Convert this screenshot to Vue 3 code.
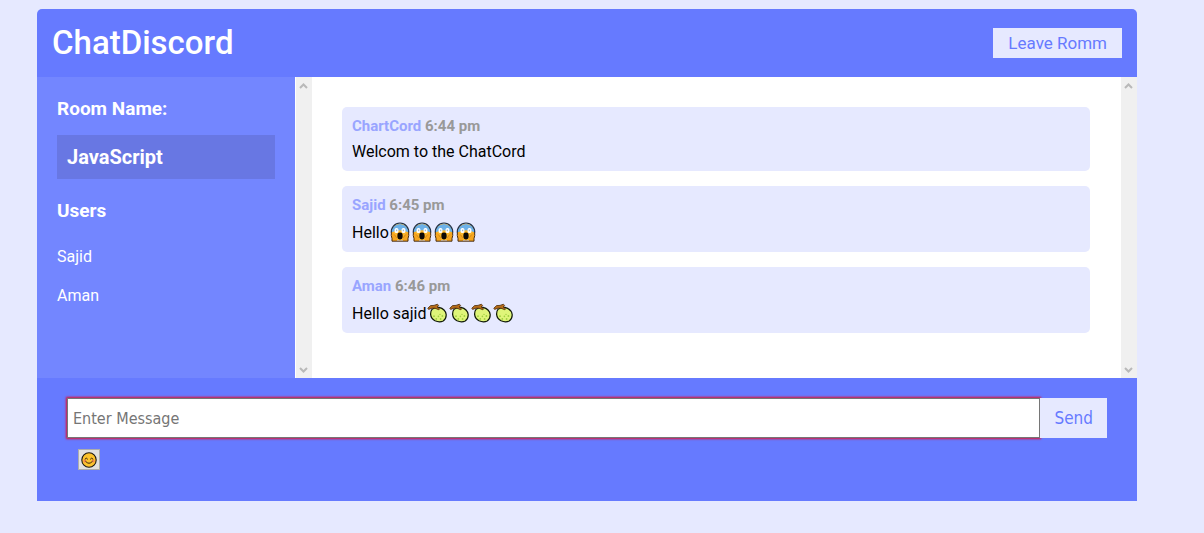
<script setup>
import { ref } from 'vue'

const draft = ref('')
const users = ['Sajid', 'Aman']
const messages = [
  { author: 'ChartCord', time: '6:44 pm', text: 'Welcom to the ChatCord', icon: '' },
  { author: 'Sajid', time: '6:45 pm', text: 'Hello', icon: 'scream' },
  { author: 'Aman', time: '6:46 pm', text: 'Hello sajid', icon: 'fruit' }
]
</script>

<template>
  <div class="page">
    <div class="chat">
      <header class="chat-header">
        <h1>ChatDiscord</h1>
        <a class="leave" href="#">Leave Romm</a>
      </header>

      <main class="chat-main">
        <aside class="sidebar">
          <h3>Room Name:</h3>
          <h2>JavaScript</h2>
          <h3>Users</h3>
          <ul>
            <li v-for="user in users" :key="user">{{ user }}</li>
          </ul>
        </aside>
        <div class="track track-left" aria-hidden="true">
          <svg viewBox="0 0 9 6"><path d="M1 5 L4.5 1.5 L8 5" /></svg>
          <svg viewBox="0 0 9 6"><path d="M1 1 L4.5 4.5 L8 1" /></svg>
        </div>
        <section class="messages">
          <article v-for="m in messages" :key="m.time" class="message">
            <p class="meta">{{ m.author }} <span>{{ m.time }}</span></p>
            <p class="body">
              <span>{{ m.text }}</span>
              <template v-if="m.icon === 'scream'">
                <svg v-for="n in 4" :key="n" class="emoji" viewBox="0 0 22 21">
                  <circle cx="11" cy="11" r="8.6" fill="#fbb62b" />
                  <path d="M2.4 11.5 A8.6 8.6 0 0 1 19.6 11.5 Q11 7 2.4 11.5Z" fill="#6db1e8" />
                  <path d="M2.4 12 A8.7 8.7 0 1 1 19.6 12" fill="none" stroke="#203149" stroke-width="1.2" />
                  <rect x="5.6" y="7" width="3.8" height="5" rx="1.6" fill="#fff" />
                  <rect x="12.6" y="7" width="3.8" height="5" rx="1.6" fill="#fff" />
                  <rect x="7.3" y="8.6" width="0.9" height="1.6" fill="#7f9fb8" />
                  <rect x="13.8" y="8.6" width="0.9" height="1.6" fill="#7f9fb8" />
                  <path d="M2.5 11.5 Q4.4 10.8 5.3 13.5 L7.6 16.5 Q8.6 19 8 20 H3 V17.5 Q2 14 2.5 11.5Z" fill="#f5a51f" />
                  <path d="M19.5 11.5 Q17.6 10.8 16.7 13.5 L14.4 16.5 Q13.4 19 14 20 H19 V17.5 Q20 14 19.5 11.5Z" fill="#f5a51f" />
                  <path d="M2.4 11.5 Q1.8 14.5 3 17.5 V20.2 H19 V17.5 Q20.2 14.5 19.6 11.5" fill="none" stroke="#4a2c0c" stroke-width="1" />
                  <path d="M5.4 13.5 L7.8 16.8 M16.6 13.5 L14.2 16.8" stroke="#c9780f" stroke-width="0.7" />
                  <rect x="8.4" y="11.4" width="5.2" height="7" rx="2.4" fill="#0d0906" />
                </svg>
              </template>
              <template v-if="m.icon === 'fruit'">
                <svg v-for="n in 4" :key="n" class="emoji" viewBox="0 0 22 21">
                  <path d="M6 7.4 Q9 4.8 13 5.4 Q19.4 7 20.2 12.6 Q20.4 17 17.2 19 Q13.5 20.8 9 18.8 Q5 16.5 4.6 12.4 Q4.5 9.3 6 7.4Z" fill="#dff579" stroke="#111a0a" stroke-width="1.2" />
                  <path d="M1.8 6.2 L4.6 3.6 L8 3.4 L11.4 2.2 L12.6 3.4 L11.2 5 L13.6 6.8 L12.8 7.8 L9 6.2 L6 6.2 L2.6 7.4Z" fill="#b86d19" stroke="#4a2908" stroke-width="0.8" />
                  <g fill="#9fcf3f">
                    <circle cx="8" cy="14.2" r="0.9" /><circle cx="10.3" cy="16.9" r="0.9" />
                    <circle cx="12.4" cy="14.4" r="0.8" /><circle cx="14.6" cy="17" r="0.9" />
                    <circle cx="16.4" cy="14" r="0.9" /><circle cx="14" cy="12.4" r="0.7" />
                  </g>
                </svg>
              </template>
            </p>
          </article>
        </section>
        <div class="track" aria-hidden="true">
          <svg viewBox="0 0 9 6"><path d="M1 5 L4.5 1.5 L8 5" /></svg>
          <svg viewBox="0 0 9 6"><path d="M1 1 L4.5 4.5 L8 1" /></svg>
        </div>
      </main>

      <footer class="composer">
        <form @submit.prevent>
          <input v-model="draft" type="text" placeholder="Enter Message" aria-label="Enter Message" />
          <button class="send" type="submit">Send</button>
        </form>
        <button class="picker" type="button" aria-label="Choose an emoji">
          <svg viewBox="0 0 16 16">
            <circle cx="8" cy="8" r="7.2" fill="#fcc32c" stroke="#1c1710" stroke-width="1.1" />
            <circle cx="3.8" cy="9" r="1.5" fill="#f58a4b" />
            <circle cx="12.2" cy="9" r="1.5" fill="#f58a4b" />
            <path d="M4 7 Q5.3 5 6.6 7 M9.4 7 Q10.7 5 12 7 M4.7 9.5 Q8 13.3 11.3 9.5" fill="none" stroke="#3a260c" stroke-width="1" stroke-linecap="round" />
          </svg>
        </button>
      </footer>
    </div>
  </div>
</template>

<style>
body {
  margin: 0;
  background: #e6e9ff;
}
</style>

<style scoped>
* {
  box-sizing: border-box;
  margin: 0;
  padding: 0;
}
.page {
  padding: 9px 67px 32px 37px;
  font-family: Roboto, "Liberation Sans", sans-serif;
  font-size: 16px;
  line-height: 20px;
}
.chat-header {
  display: flex;
  align-items: center;
  justify-content: space-between;
  padding: 14px 15px;
  background: #667aff;
  border-radius: 5px 5px 0 0;
}
h1 {
  color: #fff;
  font-size: 33px;
  font-weight: 500;
  line-height: 40px;
}
.leave {
  padding: 5px 15px;
  background: #e6e9ff;
  color: #667aff;
  font-size: 17px;
  text-decoration: none;
}
.chat-main {
  display: flex;
  background: #fff;
}
.sidebar {
  flex: 0 0 258px;
  padding: 20px;
  background: #7386ff;
  color: #fff;
}
h3 {
  font-size: 19px;
  font-weight: 700;
  line-height: 23px;
}
h2 {
  margin: 15px 0 20px;
  padding: 10px;
  background: #6877e3;
  font-size: 20px;
  font-weight: 700;
  line-height: 24px;
}
ul {
  margin-top: 15px;
  list-style: none;
}
li {
  padding: 10px 0;
  line-height: 19px;
}
.track {
  display: flex;
  flex: 0 0 16px;
  flex-direction: column;
  align-items: center;
  justify-content: space-between;
  padding: 6px 1px 5px 0;
  background: #f0f0f0;
}
.track-left {
  margin-left: 1px;
}
.track svg {
  width: 9px;
  height: 6px;
  fill: none;
  stroke: #b9b9b9;
  stroke-width: 2;
}
.messages {
  flex: 1;
  padding: 30px 31px 30px 30px;
}
.message {
  margin-bottom: 15px;
  padding: 10px;
  background: #e6e9ff;
  border-radius: 5px;
}
.meta {
  margin-bottom: 7px;
  color: #99a5ff;
  font-size: 15px;
  font-weight: 700;
  line-height: 18px;
}
.meta span {
  color: #999;
}
.body {
  display: flex;
  align-items: flex-end;
  color: #000;
  line-height: 19px;
}
.emoji {
  width: 22px;
  height: 21px;
}
.composer {
  padding: 20px 30px 31px;
  background: #667aff;
}
form {
  display: flex;
}
input {
  flex: 1;
  min-width: 0;
  height: 40px;
  padding: 0 5px;
  border: 1px solid #767676;
  border-radius: 0;
  outline: none;
  background: #fff;
  box-shadow: 0 0 2px 1px #e01030;
  font-family: "DejaVu Sans Condensed", "DejaVu Sans", sans-serif;
  font-size: 16px;
}
input::placeholder {
  color: #757575;
  opacity: 1;
}
.send {
  position: relative;
  padding: 0 14px;
  border: 0;
  background: #e6e9ff;
  color: #667aff;
  font-family: "DejaVu Sans Condensed", "DejaVu Sans", sans-serif;
  font-size: 17px;
}
.picker {
  display: flex;
  align-items: center;
  justify-content: center;
  width: 22px;
  height: 21px;
  margin: 11px 0 0 11px;
  border: 1px solid #adadad;
  background: #e1e1e1;
}
.picker svg {
  width: 16px;
  height: 16px;
}
</style>
